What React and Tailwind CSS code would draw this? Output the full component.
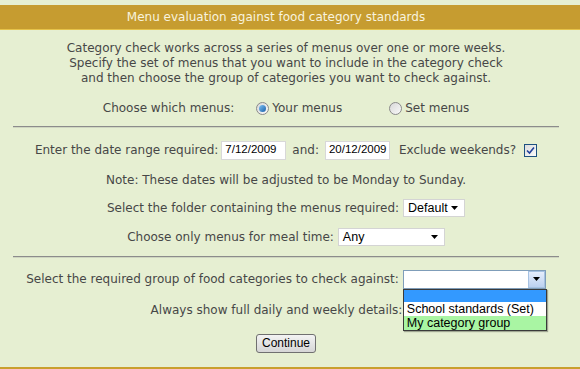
const FONT = { fontFamily: '"DejaVu Sans", Verdana, sans-serif' };
const ARIAL = { fontFamily: '"Liberation Sans", Arial, sans-serif' };

function Radio({ checked }) {
  return (
    <span className="inline-flex shrink-0 w-[13px] h-[13px] rounded-full border border-[#8a8a8a] bg-gradient-to-br from-[#d8d8d8] to-[#fafafa] items-center justify-center">
      {checked && <span className="w-[7px] h-[7px] rounded-full bg-gradient-to-br from-[#7fc3f5] to-[#1660a8]" />}
    </span>
  );
}

function Check() {
  return (
    <span className="inline-flex shrink-0 w-[13px] h-[13px] border border-[#1d5180] bg-gradient-to-br from-[#dcdcdc] to-[#fbfbfb] items-center justify-center">
      <svg width="9" height="9" viewBox="0 0 9 9">
        <path d="M1 4.5 L3.5 7 L8 1.5" stroke="#21409a" strokeWidth="1.6" fill="none" />
      </svg>
    </span>
  );
}

function Select({ value, width }) {
  return (
    <span
      className="inline-flex shrink-0 items-center justify-between h-[18px] bg-white border border-[#d4d4d4] pl-[4px] pr-[6px] text-[12.5px] text-black"
      style={{ ...ARIAL, width }}
    >
      <span>{value}</span>
      <svg width="7" height="4" viewBox="0 0 7 4"><path d="M0 0 H7 L3.5 4 Z" fill="#000" /></svg>
    </span>
  );
}

function DateBox({ value }) {
  return (
    <span className="inline-flex shrink-0 items-center h-[19px] w-[65px] bg-white border border-[#d8d8d8] pl-[3px] text-[11.5px] text-black" style={ARIAL}>
      {value}
    </span>
  );
}

function Row({ children, className = '' }) {
  return <div className={`flex items-center justify-center h-[20px] whitespace-nowrap ${className}`}>{children}</div>;
}

export default function App() {
  return (
    <div className="w-[580px] h-[369px] bg-[#e6efd2] pt-[5px] text-[12px] text-[#474747] overflow-hidden" style={FONT}>
      <div className="h-[25px] bg-[#c69c30] border-b border-[#e6c24a] flex items-center justify-center pr-[28px] text-[#f8f3de]">
        Menu evaluation against food category standards
      </div>

      <div className="w-[572px]">
        <div className="mt-[11px] text-center leading-[15px]">
          <p>Category check works across a series of menus over one or more weeks.</p>
          <p>Specify the set of menus that you want to include in the category check</p>
          <p>and then choose the group of categories you want to check against.</p>
        </div>

        <Row className="mt-[12px]">
          <span>Choose which menus:</span>
          <span className="ml-[22px] flex items-center gap-[3px]"><Radio checked /> Your menus</span>
          <span className="ml-[47px] flex items-center gap-[3px]"><Radio /> Set menus</span>
        </Row>

        <div className="mt-[8px] mx-[13px] h-[2px] bg-[#8c8c8c] border-b border-[#cfd6c0]" />

        <Row className="mt-[12px] gap-[3px]">
          <span>Enter the date range required:</span>
          <DateBox value="7/12/2009" />
          <span className="mx-[3px]">and:</span>
          <DateBox value="20/12/2009" />
          <span className="ml-[6px] mr-[5px]">Exclude weekends?</span>
          <Check />
        </Row>

        <Row className="mt-[10px]">Note: These dates will be adjusted to be Monday to Sunday.</Row>

        <Row className="mt-[8px] gap-[4px]">
          <span>Select the folder containing the menus required:</span>
          <Select value="Default" width={62} />
        </Row>

        <Row className="mt-[9px] gap-[4px]">
          <span>Choose only menus for meal time:</span>
          <Select value="Any" width={107} />
        </Row>

        <div className="mt-[9px] mx-[13px] h-[2px] bg-[#8c8c8c] border-b border-[#cfd6c0]" />

        <Row className="mt-[11px] gap-[4px]">
          <span>Select the required group of food categories to check against:</span>
          <span className="relative inline-flex shrink-0 w-[143px] h-[19px] bg-white border border-[#7f9db9]">
            <span className="flex-1" />
            <span className="w-[17px] h-full border border-[#a6c2e2] bg-gradient-to-b from-[#e6eefc] to-[#bcd1f0] flex items-center justify-center">
              <svg width="7" height="4" viewBox="0 0 7 4"><path d="M0 0 H7 L3.5 4 Z" fill="#000" /></svg>
            </span>
            <div className="absolute left-[-1px] top-[18px] w-[144px] border border-[#3a3a3a] bg-white text-[12.5px] text-black z-10 shadow-[1px_1px_1px_rgba(0,0,0,0.3)]" style={ARIAL}>
              <div className="h-[12px] bg-[#3399ff]" />
              <div className="h-[14px] leading-[14px] pl-[3px]">School standards (Set)</div>
              <div className="h-[14px] leading-[14px] pl-[3px] bg-[#a9f5a3]">My category group</div>
            </div>
          </span>
        </Row>

        <Row className="mt-[11px] gap-[6px]">
          <span>Always show full daily and weekly details:</span>
          <span className="inline-flex w-[13px] h-[13px] border border-[#1d5180] bg-white" />
        </Row>

        <Row className="mt-[13px]">
          <button
            className="h-[19px] w-[60px] rounded-[3px] border border-[#707070] bg-gradient-to-b from-[#f3f3f3] to-[#d6d6d6] text-[12px] text-black leading-none"
            style={ARIAL}
          >
            Continue
          </button>
        </Row>
      </div>

      <div className="mt-[14px] h-[2px] bg-[#c99f2e]" />
    </div>
  );
}
